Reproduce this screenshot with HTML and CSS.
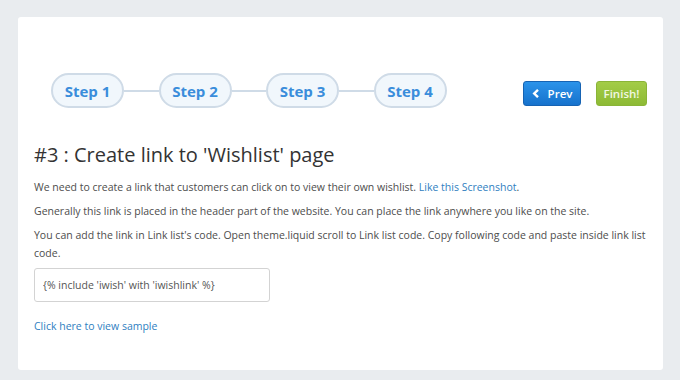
FILE: index.html
```html
<!DOCTYPE html>
<html lang="en">
<head>
  <meta charset="UTF-8" />
  <title>Wishlist setup - Step 3</title>
  <link rel="stylesheet" href="styles.css">
</head>
<body>
  <div class="panel">
    <div class="wizard-head">
      <div class="steps">
        <div class="step">Step 1</div>
        <div class="step-line"></div>
        <div class="step">Step 2</div>
        <div class="step-line"></div>
        <div class="step">Step 3</div>
        <div class="step-line"></div>
        <div class="step">Step 4</div>
      </div>
      <div class="actions">
        <button class="btn btn-prev">
          <svg width="8" height="9" viewBox="0 0 8 9"><path d="M6 0.8 L2.2 4.5 L6 8.2" fill="none" stroke="#fff" stroke-width="2.4"/></svg>
          Prev
        </button>
        <button class="btn btn-finish">Finish!</button>
      </div>
    </div>

    <h2 class="title">#3 : Create link to 'Wishlist' page</h2>
    <p>We need to create a link that customers can click on to view their own wishlist. <a href="#">Like this Screenshot</a>.</p>
    <p>Generally this link is placed in the header part of the website. You can place the link anywhere you like on the site.</p>
    <p>You can add the link in Link list's code. Open theme.liquid scroll to Link list code. Copy following code and paste inside link list code.</p>
    <input class="code-box" type="text" value="{% include 'iwish' with 'iwishlink' %}" readonly>
    <a class="sample-link" href="#">Click here to view sample</a>
  </div>
</body>
</html>
```

FILE: styles.css
```css
* {
  box-sizing: border-box;
  margin: 0;
  padding: 0;
}

body {
  background: #e9ecef;
  font-family: 'Open Sans', 'Liberation Sans', sans-serif;
  color: #4d4d4d;
}

.panel {
  width: 645px;
  height: 353px;
  margin: 17px 0 0 18px;
  background: #fff;
  border-radius: 3px;
  padding: 16px;
}

.wizard-head {
  display: flex;
  justify-content: space-between;
  align-items: flex-start;
  margin-top: 40px;
}

.steps {
  display: flex;
  align-items: center;
  margin-left: 17px;
}

.step {
  width: 73px;
  height: 35px;
  border: 2px solid #cfdbe7;
  border-radius: 18px;
  background: #f1f7fc;
  color: #3a8ddb;
  font-weight: 700;
  font-size: 15px;
  display: flex;
  align-items: center;
  justify-content: center;
}

.step-line {
  width: 34.5px;
  height: 2px;
  background: #cfdbe7;
}

.actions {
  display: flex;
  gap: 15px;
  margin-top: 8px;
}

.btn {
  height: 25px;
  border-radius: 3px;
  font-family: 'Open Sans', 'Liberation Sans', sans-serif;
  font-size: 11.5px;
  font-weight: 600;
  display: flex;
  align-items: center;
  justify-content: center;
  gap: 8px;
}

.btn-prev {
  width: 58px;
  background: linear-gradient(#2b93ea, #1672cc);
  border: 1px solid #1663b3;
  color: #fff;
}

.btn-finish {
  width: 51px;
  background: linear-gradient(#a3cc47, #8dba35);
  border: 1px solid #8ab438;
  color: #f1f7e2;
}

.title {
  margin-top: 32px;
  font-size: 20px;
  font-weight: 400;
  line-height: 30px;
  color: #333;
}

p {
  font-size: 10.5px;
  line-height: 18px;
  margin-top: 8px;
}

p + p {
  margin-top: 6px;
}

a {
  color: #2f80bf;
  text-decoration: none;
}

.code-box {
  display: block;
  width: 236px;
  height: 34px;
  margin-top: 6px;
  padding: 0 8px;
  border: 1px solid #d3d3d3;
  border-radius: 3px;
  font-family: 'Open Sans', 'Liberation Sans', sans-serif;
  font-size: 10.5px;
  color: #555;
  outline: none;
}

.sample-link {
  display: block;
  margin-top: 15px;
  font-size: 10.5px;
  line-height: 18px;
}
```
